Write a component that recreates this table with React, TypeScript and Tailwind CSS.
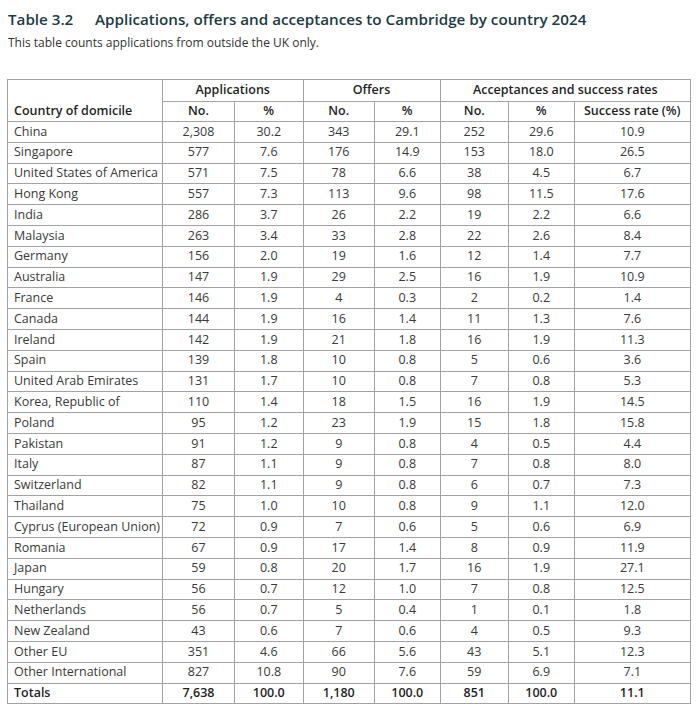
import React from 'react'

type Row = [string, string, string, string, string, string, string, string]

const rows: Row[] = [
  ['China', '2,308', '30.2', '343', '29.1', '252', '29.6', '10.9'],
  ['Singapore', '577', '7.6', '176', '14.9', '153', '18.0', '26.5'],
  ['United States of America', '571', '7.5', '78', '6.6', '38', '4.5', '6.7'],
  ['Hong Kong', '557', '7.3', '113', '9.6', '98', '11.5', '17.6'],
  ['India', '286', '3.7', '26', '2.2', '19', '2.2', '6.6'],
  ['Malaysia', '263', '3.4', '33', '2.8', '22', '2.6', '8.4'],
  ['Germany', '156', '2.0', '19', '1.6', '12', '1.4', '7.7'],
  ['Australia', '147', '1.9', '29', '2.5', '16', '1.9', '10.9'],
  ['France', '146', '1.9', '4', '0.3', '2', '0.2', '1.4'],
  ['Canada', '144', '1.9', '16', '1.4', '11', '1.3', '7.6'],
  ['Ireland', '142', '1.9', '21', '1.8', '16', '1.9', '11.3'],
  ['Spain', '139', '1.8', '10', '0.8', '5', '0.6', '3.6'],
  ['United Arab Emirates', '131', '1.7', '10', '0.8', '7', '0.8', '5.3'],
  ['Korea, Republic of', '110', '1.4', '18', '1.5', '16', '1.9', '14.5'],
  ['Poland', '95', '1.2', '23', '1.9', '15', '1.8', '15.8'],
  ['Pakistan', '91', '1.2', '9', '0.8', '4', '0.5', '4.4'],
  ['Italy', '87', '1.1', '9', '0.8', '7', '0.8', '8.0'],
  ['Switzerland', '82', '1.1', '9', '0.8', '6', '0.7', '7.3'],
  ['Thailand', '75', '1.0', '10', '0.8', '9', '1.1', '12.0'],
  ['Cyprus (European Union)', '72', '0.9', '7', '0.6', '5', '0.6', '6.9'],
  ['Romania', '67', '0.9', '17', '1.4', '8', '0.9', '11.9'],
  ['Japan', '59', '0.8', '20', '1.7', '16', '1.9', '27.1'],
  ['Hungary', '56', '0.7', '12', '1.0', '7', '0.8', '12.5'],
  ['Netherlands', '56', '0.7', '5', '0.4', '1', '0.1', '1.8'],
  ['New Zealand', '43', '0.6', '7', '0.6', '4', '0.5', '9.3'],
  ['Other EU', '351', '4.6', '66', '5.6', '43', '5.1', '12.3'],
  ['Other International', '827', '10.8', '90', '7.6', '59', '6.9', '7.1'],
]

const totals: Row = ['Totals', '7,638', '100.0', '1,180', '100.0', '851', '100.0', '11.1']

const cell = 'border border-[#a3a3a3] h-[20.8px] p-0 leading-none'
const head = 'border border-[#a3a3a3] p-0 text-center font-semibold'

function DataRow({ row, bold }: { row: Row; bold?: boolean }) {
  return (
    <tr className={bold ? 'font-semibold text-[#1f1f1f]' : ''}>
      <td className={`${cell} pl-[6px] text-left`}>{row[0]}</td>
      {row.slice(1).map((v, i) => (
        <td key={i} className={`${cell} text-center`}>
          {v}
        </td>
      ))}
    </tr>
  )
}

export default function App() {
  return (
    <div className="w-[699px] h-[712px] bg-white font-['Open_Sans',sans-serif] text-[#3a3a3a]">
      <div className="pt-[8px] pl-[8px]">
        <h1 className="flex text-[15.2px] font-semibold leading-[22px] text-[#1c3b44]">
          <span className="w-[87px]">Table 3.2</span>
          <span>Applications, offers and acceptances to Cambridge by country 2024</span>
        </h1>
        <p className="mt-[4px] text-[12px] leading-[17px] text-[#333]">
          This table counts applications from outside the UK only.
        </p>
      </div>

      <table className="ml-[7px] mt-[28px] w-[683px] table-fixed border-collapse text-[12.5px]">
        <colgroup>
          <col className="w-[155px]" />
          <col className="w-[72px]" />
          <col className="w-[68.5px]" />
          <col className="w-[71.5px]" />
          <col className="w-[65.5px]" />
          <col className="w-[68.5px]" />
          <col className="w-[65.5px]" />
          <col className="w-[116.5px]" />
        </colgroup>
        <thead className="text-[#1f1f1f]">
          <tr>
            <th className={`${head} border-b-0 h-[22px]`} />
            <th colSpan={2} className={`${head} h-[22px]`}>
              Applications
            </th>
            <th colSpan={2} className={`${head} h-[22px]`}>
              Offers
            </th>
            <th colSpan={3} className={`${head} h-[22px]`}>
              Acceptances and success rates
            </th>
          </tr>
          <tr>
            <th className={`${head} border-t-0 h-[20px] pl-[6px] !text-left`}>
              Country of domicile
            </th>
            <th className={`${head} h-[20px]`}>No.</th>
            <th className={`${head} h-[20px]`}>%</th>
            <th className={`${head} h-[20px]`}>No.</th>
            <th className={`${head} h-[20px]`}>%</th>
            <th className={`${head} h-[20px]`}>No.</th>
            <th className={`${head} h-[20px]`}>%</th>
            <th className={`${head} h-[20px]`}>Success rate (%)</th>
          </tr>
        </thead>
        <tbody>
          {rows.map((r) => (
            <DataRow key={r[0]} row={r} />
          ))}
          <DataRow row={totals} bold />
        </tbody>
      </table>
    </div>
  )
}
